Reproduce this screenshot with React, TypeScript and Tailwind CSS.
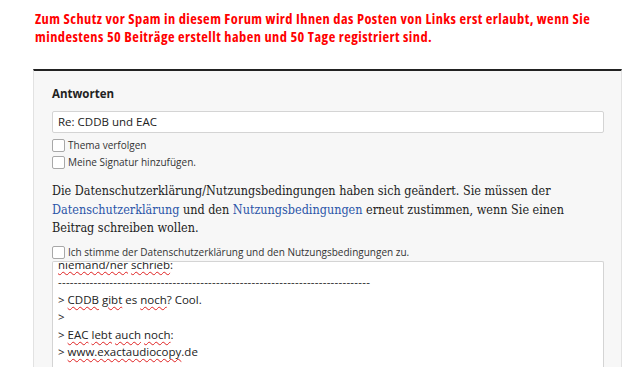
export default function App() {
  const sans = "font-['Open_Sans','Noto_Sans',sans-serif]"
  const wavy = "underline decoration-wavy decoration-[#e02020] decoration-1 underline-offset-2"
  const box = "h-[13px] w-[13px] shrink-0 rounded-[2px] border border-[#a8a8a8] bg-white"

  return (
    <div className={`w-[628px] h-[367px] overflow-hidden bg-white ${sans}`}>
      {/* spam notice */}
      <div className="pl-[35px] pt-[10px] text-[14.4px] leading-[17.5px] font-bold tracking-[0.45px] text-[#ff0000] [font-stretch:87.5%] whitespace-nowrap">
        Zum Schutz vor Spam in diesem Forum wird Ihnen das Posten von Links erst erlaubt, wenn Sie
        <br />
        mindestens 50 Beiträge erstellt haben und 50 Tage registriert sind.
      </div>

      {/* reply panel */}
      <div className="ml-[33px] mr-[6px] mt-[24px] border-t-2 border-t-[#222] border-l border-r border-[#e2e2e2] bg-[#f7f7f7] pl-[18px] pr-[17px] pt-[13px]">
        <div className="text-[11.5px] font-bold text-[#222] leading-[20px]">Antworten</div>

        <div className="mt-[7px] h-[22px] rounded-[2px] border border-[#d4d4d4] bg-white pl-[5px] text-[11.5px] leading-[20px] text-[#222]">
          Re: CDDB und EAC
        </div>

        <label className="mt-[4px] flex items-center gap-[3px] text-[10px] leading-[17px] text-[#333]">
          <span className={box} />
          Thema verfolgen
        </label>
        <label className="flex items-center gap-[3px] text-[10px] leading-[17px] text-[#333]">
          <span className={box} />
          Meine Signatur hinzufügen.
        </label>

        <p className="mt-[11px] font-['DejaVu_Serif','Liberation_Serif',serif] [font-stretch:condensed] text-[12.5px] leading-[18.5px] text-[#222]">
          Die Datenschutzerklärung/Nutzungsbedingungen haben sich geändert. Sie müssen der{" "}
          <span className="text-[#2b55a8]">Datenschutzerklärung</span> und den{" "}
          <span className="text-[#2b55a8]">Nutzungsbedingungen</span> erneut zustimmen, wenn Sie einen Beitrag
          schreiben wollen.
        </p>

        <label className="mt-[6px] flex items-center gap-[3px] text-[10px] leading-[17px] text-[#333]">
          <span className={box} />
          Ich stimme der Datenschutzerklärung und den Nutzungsbedingungen zu.
        </label>

        {/* message textarea (scrolled) */}
        <div className="h-[120px] overflow-hidden rounded-t-[2px] border border-b-0 border-[#d4d4d4] bg-white pl-[5px] text-[11.5px] leading-[17.6px] text-[#222]">
          <div className="-mt-[6px]">
            <div>
              <span className={wavy}>niemand/ner</span> <span className={wavy}>schrieb</span>:
            </div>
            <div className="tracking-[0.25px]">-------------------------------------------------------------------------------</div>
            <div>
              &gt; <span className={wavy}>CDDB</span> <span className={wavy}>gibt</span> es{" "}
              <span className={wavy}>noch</span>? Cool.
            </div>
            <div>&gt;</div>
            <div>
              &gt; <span className={wavy}>EAC</span> <span className={wavy}>lebt</span>{" "}
              <span className={wavy}>auch</span> <span className={wavy}>noch</span>:
            </div>
            <div>
              &gt; <span className={wavy}>www.exactaudiocopy</span>.de
            </div>
          </div>
        </div>
      </div>
    </div>
  )
}
